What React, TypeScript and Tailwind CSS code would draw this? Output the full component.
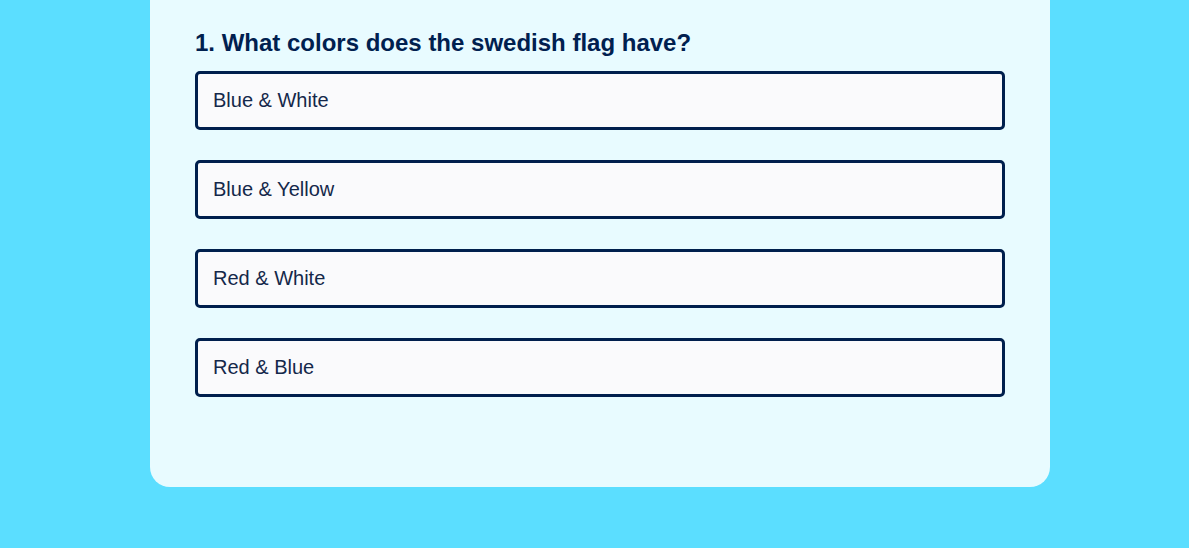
export default function App() {
  const options = ["Blue & White", "Blue & Yellow", "Red & White", "Red & Blue"];
  return (
    <div className="min-h-[548px] w-full bg-[#5bdeff]" style={{ fontFamily: '"Liberation Sans", Arial, sans-serif' }}>
      <div className="ml-[150px] w-[900px] rounded-b-[20px] bg-[#e8fbff] px-[45px] pt-[29px] pb-[90px]">
        <h2 className="text-[24px] font-bold leading-[28px] text-[#00204f]">1. What colors does the swedish flag have?</h2>
        <div className="mt-[14px] flex flex-col gap-[30px]">
          {options.map((o) => (
            <button
              key={o}
              className="flex h-[59px] w-[810px] items-center rounded-[5px] border-[3px] border-[#001f4d] bg-[#fafafc] px-[15px] pb-[2px] text-left text-[20px] text-[#14284a]"
            >
              {o}
            </button>
          ))}
        </div>
      </div>
    </div>
  );
}
